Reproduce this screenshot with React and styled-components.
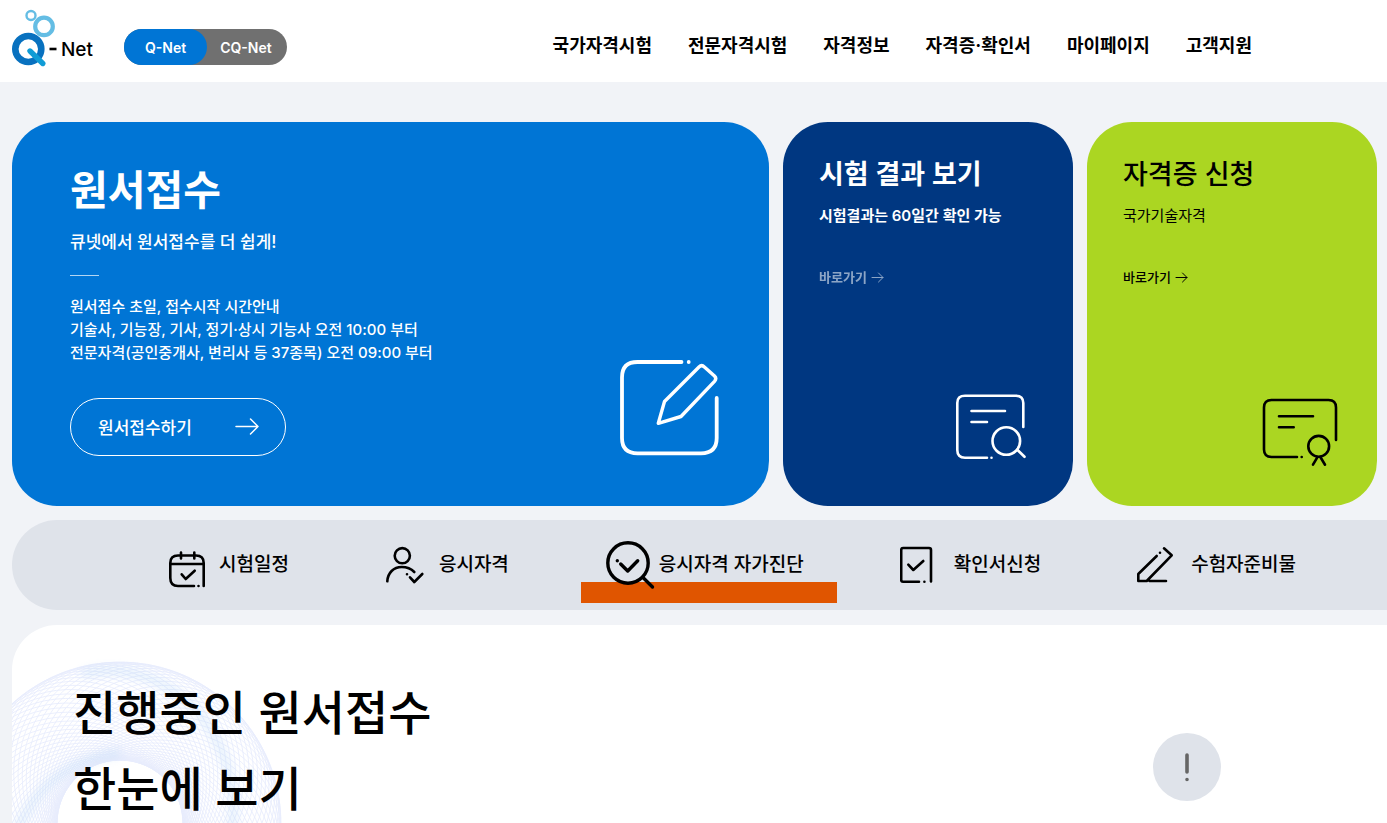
import styled, { createGlobalStyle } from 'styled-components';

const GlobalStyle = createGlobalStyle`
    * { box-sizing: border-box; }
    body {
        margin: 0;
        background: #f1f3f7;
        color: #000;
        font-family: Inter, "Noto Sans CJK KR", sans-serif;
    }
    h1, h2, p { margin: 0; }
    a { color: inherit; text-decoration: none; }
    button { font-family: inherit; cursor: pointer; }
    svg { display: block; flex: none; }
`;

const Page = styled.div`
    height: 100vh;
    overflow: hidden;
`;

const Header = styled.header`
    display: flex;
    align-items: center;
    height: 82px;
    padding: 0 135px 0 12px;
    background: #fff;
`;

const Logo = styled.a`
    display: flex;
    align-items: flex-end;
    gap: 11px;
    width: 112px;
    height: 60px;
    margin-bottom: 6px;
    font-size: 19px;
    font-weight: 500;
    line-height: 36px;
`;

const Toggle = styled.div`
    display: flex;
    margin-top: 12px;
    border-radius: 18px;
    background: #707070;
`;

const ToggleButton = styled.button`
    height: 36px;
    padding: ${props => props.$active ? '0 21px' : '0 15px 0 13px'};
    border: 0;
    border-radius: 18px;
    background: ${props => props.$active ? '#0075d5' : 'transparent'};
    color: #fff;
    font-size: 14px;
    font-weight: 600;
`;

const Nav = styled.nav`
    display: flex;
    gap: 36px;
    margin-left: auto;
    margin-top: 10px;
    font-size: 18px;
    font-weight: 700;
    line-height: 26px;
    white-space: nowrap;
`;

const Cards = styled.section`
    display: grid;
    grid-template-columns: 1fr 290px 290px;
    gap: 14px;
    padding: 40px 10px 14px 12px;
`;

const Card = styled.article`
    display: flex;
    flex-direction: column;
    min-height: 384px;
    padding: 35px 36px 38px;
    border-radius: 45px;
    background: ${props => props.$bg};
    color: ${props => props.$color};

    > svg {
        margin-top: auto;
        align-self: flex-end;
    }
`;

const MainCard = styled(Card)`
    flex-direction: row;
    justify-content: space-between;
    padding: 43px 50px 49px 58px;
`;

const MainTitle = styled.h1`
    font-size: 41px;
    font-weight: 700;
    line-height: 50px;
`;

const MainSub = styled.p`
    margin-top: 15px;
    font-size: 17px;
    font-weight: 500;
    line-height: 24px;
`;

const Rule = styled.div`
    width: 29px;
    height: 1px;
    margin: 21px 0 19px;
    background: rgba(255, 255, 255, 0.7);
`;

const Guide = styled.p`
    font-size: 15px;
    font-weight: 500;
    line-height: 23px;
`;

const ApplyButton = styled.button`
    display: flex;
    align-items: center;
    justify-content: space-between;
    width: 216px;
    height: 58px;
    margin-top: 34px;
    padding: 0 26px 2px 27px;
    border: 1px solid #fff;
    border-radius: 29px;
    background: transparent;
    color: #fff;
    font-size: 17px;
    font-weight: 500;
`;

const CardTitle = styled.h2`
    font-size: 27px;
    font-weight: ${props => props.$weight};
    line-height: 36px;
`;

const CardSub = styled.p`
    margin-top: 11px;
    font-size: 15px;
    font-weight: ${props => props.$weight};
    line-height: 24px;
`;

const CardLink = styled.a`
    display: flex;
    align-items: center;
    gap: 4px;
    margin-top: 39px;
    font-size: 13px;
    font-weight: ${props => props.$dim ? 600 : 500};
    line-height: 20px;
    opacity: ${props => props.$dim ? 0.55 : 1};
`;

const QuickMenu = styled.nav`
    display: flex;
    gap: 96px;
    height: 90px;
    margin-left: 12px;
    padding-left: 153px;
    border-radius: 45px 0 0 45px;
    background: #dfe3ea;
`;

const QuickItem = styled.a`
    position: relative;
    display: flex;
    align-items: center;
    font-size: 19px;
    font-weight: 500;
    line-height: 28px;
    white-space: nowrap;
    z-index: 0;
`;

const Highlight = styled.span`
    position: absolute;
    z-index: -1;
    left: -24px;
    right: -33px;
    bottom: 7px;
    height: 21px;
    background: #e05500;
`;

const Ongoing = styled.section`
    position: relative;
    display: flex;
    justify-content: space-between;
    margin: 15px 0 0 12px;
    padding: 50px 166px 40px 61px;
    border-radius: 45px 0 0 0;
    background: #fff;
    overflow: hidden;
`;

const RingArt = styled.svg`
    position: absolute;
    left: -60px;
    top: 30px;
`;

const OngoingTitle = styled.h2`
    position: relative;
    font-size: 47px;
    font-weight: 500;
    line-height: 76px;
`;

const Notice = styled.div`
    display: flex;
    align-items: center;
    justify-content: center;
    width: 68px;
    height: 68px;
    margin-top: 58px;
    border-radius: 50%;
    background: #dfe3ea;
`;

const menus = ['국가자격시험', '전문자격시험', '자격정보', '자격증·확인서', '마이페이지', '고객지원'];

const Arrow = ({ width, height }) => (
    <svg width={width} height={height} viewBox={`0 0 ${width} ${height}`} fill="none" stroke="currentColor"
        strokeWidth={width > 20 ? 1.5 : 1} strokeLinecap="round" strokeLinejoin="round">
        <path d={`M1 ${height / 2}H${width - 1}M${width - height / 2} 1L${width - 1} ${height / 2}L${width - height / 2} ${height - 1}`} />
    </svg>
);

const LineIcon = ({ width, height, viewBox, stroke = 2.6, children }) => (
    <svg width={width} height={height} viewBox={viewBox || `0 0 ${width} ${height}`} fill="none"
        stroke="currentColor" strokeWidth={stroke} strokeLinecap="round" strokeLinejoin="round">
        {children}
    </svg>
);

// dots are zero length strokes with round caps
const quickItems = [
    {
        label: '시험일정',
        icon: <>
            <path d="M29 48H13Q5.3 48 5.3 40V25Q5.3 17.5 13 17.5H31Q38.7 17.5 38.7 25V48M5.3 26H38.7M16 14.5V20.5M29.3 14.5V20.5M33.5 48h.01" />
            <path d="M16.7 36.3L20.7 41L29.7 32.7" />
        </>,
    },
    {
        label: '응시자격',
        icon: <>
            <circle cx="17.3" cy="17.7" r="7.6" />
            <path d="M2.3 43.3C2.8 35 8.5 29 16.7 29C22 29 26.2 30.8 29.3 34M22 36.3h.01M25 39.3L29.3 44L37.3 36" />
        </>,
    },
    {
        label: '응시자격 자가진단',
        active: true,
        stroke: 3.4,
        icon: <>
            <circle cx="23" cy="25" r="20.2" />
            <path d="M37.7 39.3L47.5 49M12.3 22.7h.01M15.7 26L22.7 33L32.7 22.7" />
        </>,
    },
    {
        label: '확인서신청',
        icon: <>
            <path d="M19 43.7H3Q1.2 43.7 1.2 42V12Q1.2 10 3 10H29Q31 10 31 12V43.5M24.4 43.7h.01" />
            <path d="M8.3 26.7L13.3 32L23.3 23" />
        </>,
    },
    {
        label: '수험자준비물',
        icon: <path d="M19.7 18L1.3 36V43H9.7L34.7 17.3L27 10.3M23 14.7h.01M12.5 43H29" />,
    },
];

const ringAngles = Array.from({ length: 72 }, (_, i) => i * 5);

export default function App() {
    return (
        <>
            <GlobalStyle />
            <Page>
                <Header>
                    <Logo href="#">
                        <svg width="38" height="60" viewBox="12 8 38 60" fill="none" overflow="visible">
                            <circle cx="31" cy="15.5" r="4.5" stroke="#64bde4" strokeWidth="2.4" />
                            <circle cx="44" cy="26.4" r="8.8" stroke="#64bde4" strokeWidth="4.2" />
                            <circle cx="28.3" cy="49" r="13" stroke="#0871bf" strokeWidth="6.6" />
                            <path d="M30 51L42.8 63.5" stroke="#109cd6" strokeWidth="5.4" strokeLinecap="round" />
                            <path d="M49.5 49H56.5" stroke="#000" strokeWidth="2.6" />
                        </svg>
                        <span>Net</span>
                    </Logo>
                    <Toggle>
                        <ToggleButton type="button" $active>Q-Net</ToggleButton>
                        <ToggleButton type="button">CQ-Net</ToggleButton>
                    </Toggle>
                    <Nav>
                        {menus.map(menu => <a href="#" key={menu}>{menu}</a>)}
                    </Nav>
                </Header>

                <Cards>
                    <MainCard $bg="#0075d5" $color="#fff">
                        <div>
                            <MainTitle>원서접수</MainTitle>
                            <MainSub>큐넷에서 원서접수를 더 쉽게!</MainSub>
                            <Rule />
                            <Guide>
                                원서접수 초일, 접수시작 시간안내<br />
                                기술사, 기능장, 기사, 정기·상시 기능사 오전 10:00 부터<br />
                                전문자격(공인중개사, 변리사 등 37종목) 오전 09:00 부터
                            </Guide>
                            <ApplyButton type="button">
                                원서접수하기
                                <Arrow width={24} height={17} />
                            </ApplyButton>
                        </div>
                        <LineIcon width={100} height={100} stroke={3.8}>
                            <path d="M62.5 5H18.5Q3 5 3 20.5V81Q3 96.3 18.5 96.3H82Q97.7 96.3 97.7 81V41M69.7 5h.01" />
                            <path d="M39.3 66.3L45.5 44.5L80 10Q82.7 7.3 85.4 10L95.5 19Q98 21.5 95.5 24.3L62 59.5Z" strokeWidth="3.4" />
                        </LineIcon>
                    </MainCard>
                    <Card $bg="#003781" $color="#fff">
                        <CardTitle $weight={600}>시험 결과 보기</CardTitle>
                        <CardSub $weight={600}>시험결과는 60일간 확인 가능</CardSub>
                        <CardLink href="#" $dim>바로가기<Arrow width={13} height={11} /></CardLink>
                        <LineIcon width={84} height={76} viewBox="-2 -1 84 76">
                            <path d="M32 64.7H10Q2.3 64.7 2.3 57V10Q2.3 2.7 10 2.7H60.5Q68.3 2.7 68.3 10V34M36.5 64.7h.01M16.5 18H50M16.5 29H32" />
                            <circle cx="51.3" cy="48" r="13.8" />
                            <path d="M62.3 56.7L69.5 63.8" />
                        </LineIcon>
                    </Card>
                    <Card $bg="#abd622" $color="#000">
                        <CardTitle $weight={500}>자격증 신청</CardTitle>
                        <CardSub $weight={400}>국가기술자격</CardSub>
                        <CardLink href="#">바로가기<Arrow width={13} height={11} /></CardLink>
                        <LineIcon width={84} height={76} viewBox="-5 -6 84 76">
                            <path d="M35 59H9.5Q2 59 2 51.5V9.5Q2 2 9.5 2H66.5Q74 2 74 9.5V42M39.7 59h.01M17 18.3H51M17 29.3H31.7" />
                            <circle cx="56.7" cy="48.3" r="10.4" />
                            <path d="M55.3 59.3L51 66.7M58.5 59.3L63 66.7" />
                        </LineIcon>
                    </Card>
                </Cards>

                <QuickMenu>
                    {quickItems.map(item => (
                        <QuickItem href="#" key={item.label}>
                            {item.active && <Highlight />}
                            <LineIcon width={54} height={54} stroke={item.stroke}>{item.icon}</LineIcon>
                            {item.label}
                        </QuickItem>
                    ))}
                </QuickMenu>

                <Ongoing>
                    <RingArt width="340" height="340" fill="none">
                        <defs>
                            <filter id="soft" x="-20%" y="-20%" width="140%" height="140%">
                                <feGaussianBlur stdDeviation="4" />
                            </filter>
                        </defs>
                        <g stroke="#9fb2f5" strokeWidth="0.8" opacity="0.24">
                            {ringAngles.map(angle => (
                                <ellipse key={angle} cx="168" cy="119" rx="102" ry="112" transform={`rotate(${angle} 168 168)`} />
                            ))}
                        </g>
                        <g stroke="#bcd9f8" strokeWidth="8" opacity="0.38" filter="url(#soft)">
                            <path d="M130 19C178 8 226 28 254 68C280 106 288 150 276 190" />
                            <path d="M60 190C76 140 108 106 168 98" />
                        </g>
                    </RingArt>
                    <OngoingTitle>진행중인 원서접수<br />한눈에 보기</OngoingTitle>
                    <Notice>
                        <svg width="6" height="30" viewBox="0 0 6 30" stroke="#666" strokeWidth="3.6" strokeLinecap="round">
                            <path d="M3 3V20M3 27.5h.01" />
                        </svg>
                    </Notice>
                </Ongoing>
            </Page>
        </>
    );
}
